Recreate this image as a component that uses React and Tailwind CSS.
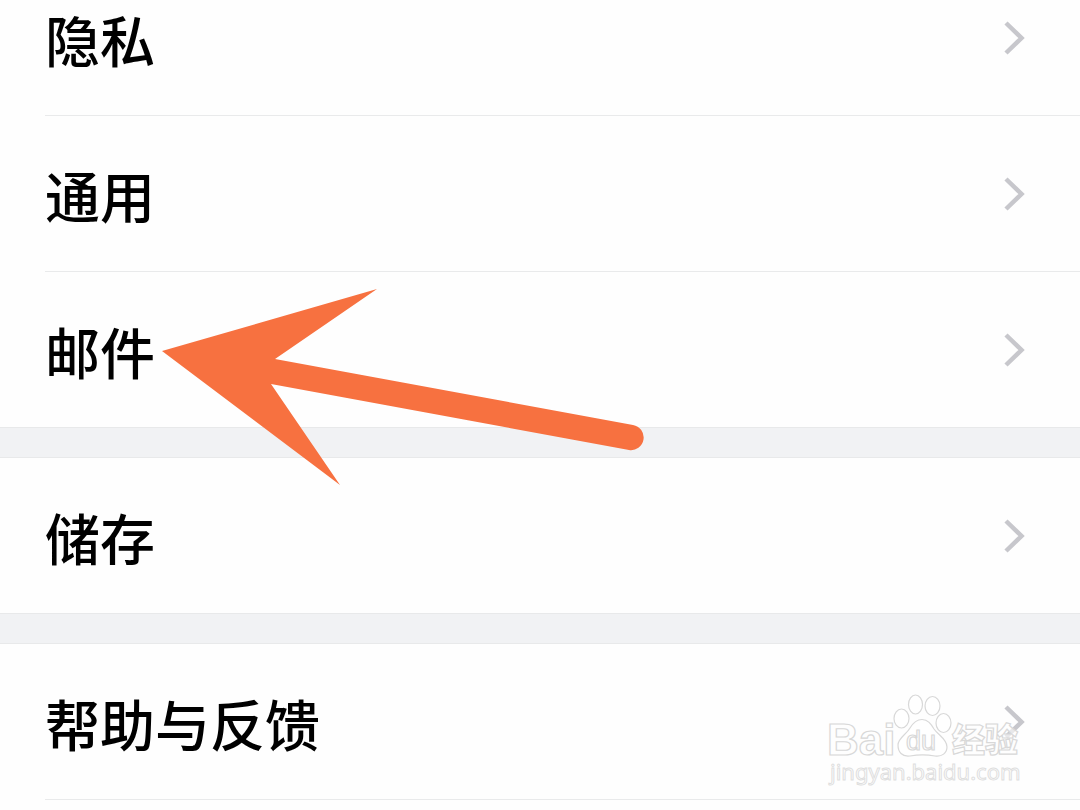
import React from "react";

const GROUPS = [
  { key: "general", items: ["隐私", "通用", "邮件"] },
  { key: "storage", items: ["储存"] },
  { key: "help", items: ["帮助与反馈"], more: true },
];

function Chevron() {
  return (
    <svg className="h-9 w-6 shrink-0" viewBox="0 0 24 36" fill="none" aria-hidden="true">
      <path d="M4 3 L19.5 18 L4 33" stroke="#c7c7cc" strokeWidth="4.5" />
    </svg>
  );
}

function SettingsRow({ label, divided }) {
  return (
    <li>
      <button
        type="button"
        className="flex h-[155px] w-full cursor-pointer items-center justify-between pr-[54px] pl-[45px] text-left"
      >
        <span className="text-[55px] leading-[72px] font-medium text-black">{label}</span>
        <Chevron />
      </button>
      {/* Hairline starts at the label's left edge */}
      {divided && <div className="ml-[45px] h-px bg-[#e9eaeb]" />}
    </li>
  );
}

function SettingsGroup({ items, more }) {
  return (
    <ul className="bg-[#fefefe]">
      {items.map((label, i) => (
        <SettingsRow key={label} label={label} divided={more || i < items.length - 1} />
      ))}
    </ul>
  );
}

/* Arrow pointing at the mail entry */
function Arrow() {
  return (
    <svg
      className="pointer-events-none absolute top-[288px] left-[162px] h-[200px] w-[484px]"
      viewBox="162 288 484 200"
      aria-hidden="true"
    >
      <path
        d="M162 351 L377 289 L275 359 L633 425 A12.5 12.5 0 0 1 629 450 L271 384 L340 485 Z"
        fill="#f77140"
      />
    </svg>
  );
}

function Watermark() {
  return (
    <svg
      className="pointer-events-none absolute right-[50px] bottom-[20px] h-[100px] w-[210px]"
      viewBox="820 690 210 100"
      fill="#ffffff"
      fillOpacity="0.6"
      stroke="#d8d8d8"
      strokeWidth="1.2"
      role="img"
      aria-label="Baidu"
    >
      <text x="827" y="755" fontSize="44" fontWeight="700" fontFamily="'Liberation Sans', sans-serif">
        Bai
      </text>
      <ellipse cx="901.5" cy="718.5" rx="7.5" ry="9.5" />
      <ellipse cx="915.5" cy="704.5" rx="7" ry="9.5" />
      <ellipse cx="932.5" cy="706" rx="7.5" ry="9.5" />
      <ellipse cx="943.5" cy="723" rx="7.5" ry="9.5" />
      <path d="M922 719.5 C928 719.5 931 724 934 729 C938 735 947 739 947 747 C947 753 942 757 935 756 C926 754.5 919 754.5 910 756 C902 757 898 752 898 745 C898 738 906 735 910 728 C913 723 916 719.5 922 719.5 Z" />
      <text x="906" y="750" fontSize="27" fontFamily="'Liberation Sans', sans-serif">
        du
      </text>
      <text
        x="952"
        y="752"
        fontSize="33"
        fontWeight="900"
        fontFamily="'Noto Sans CJK SC', sans-serif"
      >
        经验
      </text>
      <text
        x="830"
        y="780"
        fontSize="22"
        stroke="#dedede"
        strokeWidth="1"
        fontFamily="'Noto Sans', sans-serif"
      >
        jingyan.baidu.com
      </text>
    </svg>
  );
}

export default function App() {
  return (
    <div className="relative min-h-screen overflow-hidden bg-[#fefefe] font-['Noto_Sans_CJK_SC',sans-serif]">
      {/* List is scrolled part of the way past the first row */}
      <main className="-mt-10 flex flex-col">
        {GROUPS.map((group, i) => (
          <React.Fragment key={group.key}>
            {i > 0 && <div className="h-[31px] border-y border-[#e8e9ea] bg-[#f1f2f4]" />}
            <SettingsGroup items={group.items} more={group.more} />
          </React.Fragment>
        ))}
      </main>
      <Arrow />
      <Watermark />
    </div>
  );
}
